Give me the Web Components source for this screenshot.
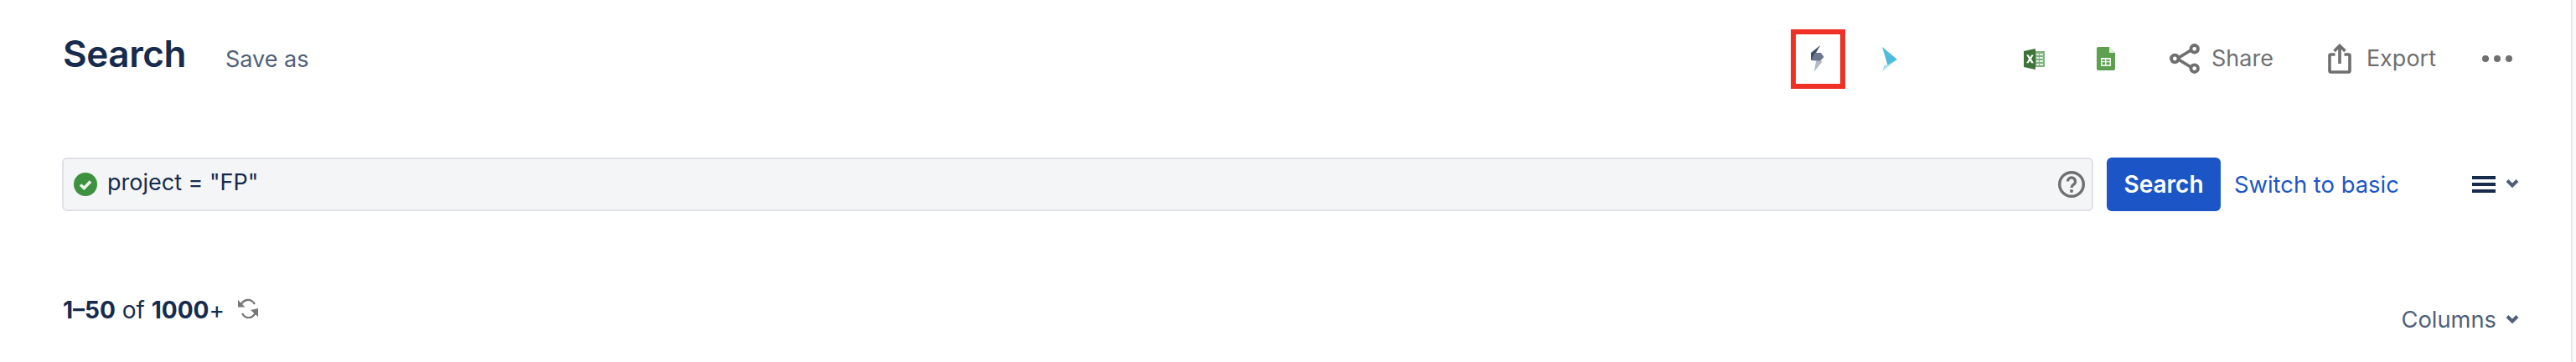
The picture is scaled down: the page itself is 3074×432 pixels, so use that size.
<!DOCTYPE html>
<html>
<head>
<meta charset="utf-8">
<style>
    html, body { margin: 0; background: #fff; height: 100%; overflow: hidden; }
    body { font-family: 'Inter', 'Liberation Sans', sans-serif; color: #172b4d; }
</style>
</head>
<body>
<search-page>
    <search-header></search-header>
    <jql-bar></jql-bar>
    <results-bar></results-bar>
</search-page>

<script>
const icons = {
    bolt: `<svg width="16" height="32" viewBox="0 0 16 32">
        <path d="M11.300 0 L0 9 V18 L5 17.500 V9 H6 Z" fill="#3f4f70"/>
        <path d="M5 9 H12 L15.500 14 L11 19 L0 18 Z" fill="#6b778c"/>
        <path d="M6 19 H14 L4 31.500 Z" fill="#b3bac5"/>
    </svg>`,
    arrow: `<svg width="18" height="29" viewBox="0 0 18 29">
        <path d="M0 0 L18 15 L6.500 22 L4 13 Z" fill="#4fbbdd"/>
        <path d="M6.500 22 L18 15 L0 29 L3 21 Z" fill="#a6dfee"/>
    </svg>`,
    excel: `<svg width="25" height="25" viewBox="0 0 25 25">
        <rect x="13" y="3" width="12" height="19" fill="#7fb27f"/>
        <path d="M15 6h3v2h-3zM19 6h4v2h-4zM15 10h3v2h-3zM19 10h4v2h-4zM15 14h3v2h-3zM19 14h4v2h-4zM15 18h3v2h-3zM19 18h4v2h-4z" fill="#e4f0e4"/>
        <path d="M0 3 L14 0 L14 25 L0 22 Z" fill="#3e7439"/>
        <path d="M3 7.500h2.800l1.700 3 1.700-3h2.600l-2.900 4.800 3 5h-2.800l-1.700-3.100-1.700 3.100H3.100l3-5z" fill="#fff"/>
    </svg>`,
    sheet: `<svg width="22" height="28" viewBox="0 0 22 28">
        <path d="M2 0 H15 L22 7 V26 a2 2 0 0 1 -2 2 H2 a2 2 0 0 1 -2 -2 V2 a2 2 0 0 1 2 -2 Z" fill="#5da150"/>
        <path d="M15 0 L22 7 H15 Z" fill="#e4efe2"/>
        <path d="M5 13 H17 V23 H5 Z M6.500 15 V17 H10 V15 Z M11.500 15 V17 H15.500 V15 Z M6.500 18.200 V21.200 H10 V18.200 Z M11.500 18.200 V21.200 H15.500 V18.200 Z" fill="#eef6ec" fill-rule="evenodd"/>
    </svg>`,
    share: `<svg width="36" height="36" viewBox="0 0 36 36" fill="none" stroke="#6f6f6f" stroke-width="3.800">
        <path d="M9 18 L27 7 M9 18 L27 29"/>
        <circle cx="6.300" cy="18" r="4.300" fill="#fff"/>
        <circle cx="29.700" cy="6.300" r="4.300" fill="#fff"/>
        <circle cx="29.700" cy="29.700" r="4.300" fill="#fff"/>
    </svg>`,
    export: `<svg width="28" height="36" viewBox="0 0 28 36" fill="none" stroke="#6f6f6f" stroke-width="3.600">
        <path d="M8.500 13 H3.500 a1.500 1.500 0 0 0 -1.500 1.500 V32.500 a1.500 1.500 0 0 0 1.500 1.500 H24.500 a1.500 1.500 0 0 0 1.500 -1.500 V14.500 a1.500 1.500 0 0 0 -1.500 -1.500 H19.500"/>
        <path d="M14 3 V24"/>
        <path d="M7.500 9 L14 2.500 L20.500 9"/>
    </svg>`
};

class SearchPage extends HTMLElement {
    constructor() {
        super();
        this.attachShadow({mode: 'open'});
        this.shadowRoot.innerHTML = `
            <style>
                :host { display: block; position: relative; height: 432px; box-sizing: border-box; padding-right: 6px; }
                .edge { position: absolute; top: 0; right: 0; bottom: 0; width: 4px; background: #fafafa; border-left: 2px solid #e8e8e8; }
            </style>
            <slot></slot>
            <div class="edge"></div>`;
    }
}

class ToolAction extends HTMLElement {
    constructor() {
        super();
        this.attachShadow({mode: 'open'});
        this.shadowRoot.innerHTML = `
            <style>
                :host { display: flex; align-items: center; gap: 14px; font-size: 27px; line-height: 36px; color: #707070; }
                :host([icon=export]) { gap: 18px; }
                svg { display: block; }
            </style>
            ${icons[this.getAttribute('icon')]}<slot></slot>`;
    }
}

class SearchHeader extends HTMLElement {
    constructor() {
        super();
        this.attachShadow({mode: 'open'});
        this.shadowRoot.innerHTML = `
            <style>
                :host { display: flex; align-items: center; height: 140px; padding-left: 75px; padding-right: 70px; }
                .title { display: flex; align-items: baseline; margin-bottom: 12px; }
                h1 { margin: 0; font-size: 44px; font-weight: 600; line-height: 56px; color: #172b4d; letter-spacing: -.4px; }
                .save { margin-left: 47px; font-size: 27px; color: #505f79; }
                .tools { margin-left: auto; display: flex; align-items: center; }
                .flag { box-sizing: border-box; width: 65px; height: 71px; border: 6px solid #ee3124; display: flex; align-items: center; justify-content: center; }
                svg { display: block; }
                .arrow { margin-left: 44px; }
                .excel { margin-left: 151px; }
                .sheet { margin-left: 62px; }
                .share { margin-left: 65px; }
                .export { margin-left: 65px; }
                .more { margin-left: 55px; display: flex; gap: 6px; }
                .more i { width: 8px; height: 8px; border-radius: 50%; background: #6f6f6f; }
            </style>
            <div class="title"><h1>Search</h1><span class="save">Save as</span></div>
            <div class="tools">
                <div class="flag">${icons.bolt}</div>
                <div class="arrow">${icons.arrow}</div>
                <div class="excel">${icons.excel}</div>
                <div class="sheet">${icons.sheet}</div>
                <tool-action class="share" icon="share">Share</tool-action>
                <tool-action class="export" icon="export">Export</tool-action>
                <div class="more"><i></i><i></i><i></i></div>
            </div>`;
    }
}

class JqlBar extends HTMLElement {
    constructor() {
        super();
        this.attachShadow({mode: 'open'});
        this.shadowRoot.innerHTML = `
            <style>
                :host { display: flex; align-items: center; height: 64px; margin-top: 48px; padding-left: 74px; padding-right: 62px; font-size: 27.4px; }
                .input { box-sizing: border-box; width: 2424px; height: 64px; display: flex; align-items: center; background: #f4f5f7; border: 2px solid #dfe1e6; border-radius: 6px; padding: 0 8px 0 12px; color: #172b4d; }
                .input span { margin-left: 12px; flex: 1; font-size: 27px; padding-bottom: 6px; }
                svg { display: block; }
                button { margin-left: 16px; width: 136px; height: 64px; border: 0; border-radius: 6px; background: #1c56c6; color: #fff; font: 600 28px 'Inter', sans-serif; padding: 0; }
                a { margin-left: 16px; color: #1c56c6; }
                .menu { margin-left: auto; display: flex; align-items: center; gap: 12px; }
                .menu svg { margin-bottom: 3px; }
                .burger { width: 28px; height: 20px; display: grid; grid-template-rows: repeat(3, 4px); align-content: space-between; }
                .burger i { background: #172b4d; }
            </style>
            <div class="input">
                <svg width="28" height="28" viewBox="0 0 28 28">
                    <circle cx="14" cy="14" r="14" fill="#3f9142"/>
                    <path d="M8 14.500 L12.300 18.500 L20 10.500" fill="none" stroke="#eaf4ea" stroke-width="3.600"/>
                </svg>
                <span>project = "FP"</span>
                <svg width="32" height="32" viewBox="0 0 32 32">
                    <circle cx="16" cy="16" r="14.300" fill="none" stroke="#6f6f6f" stroke-width="3.400"/>
                    <path d="M11.500 12.500 a4.500 4.500 0 1 1 7 3.700 c-1.600 1.100 -2.500 1.900 -2.500 3.800" fill="none" stroke="#6f6f6f" stroke-width="3.200"/>
                    <circle cx="16" cy="24" r="2" fill="#6f6f6f"/>
                </svg>
            </div>
            <button>Search</button>
            <a>Switch to basic</a>
            <div class="menu">
                <div class="burger"><i></i><i></i><i></i></div>
                <svg width="16" height="12" viewBox="0 0 16 12"><path d="M2 2.500 L8 8.500 L14 2.500" fill="none" stroke="#505f79" stroke-width="4"/></svg>
            </div>`;
    }
}

class ResultsBar extends HTMLElement {
    constructor() {
        super();
        this.attachShadow({mode: 'open'});
        this.shadowRoot.innerHTML = `
            <style>
                :host { display: flex; align-items: flex-start; margin-top: 98px; padding-left: 75px; padding-right: 62px; font-size: 28px; line-height: 36px; }
                .count { color: #172b4d; display: flex; align-items: flex-start; }
                .count span { margin-top: 2px; }
                b { font-weight: 700; }
                svg { display: block; }
                .refresh { margin: 6px 0 0 16px; }
                .columns { margin-left: auto; margin-top: 14px; display: flex; align-items: center; gap: 11px; color: #505f79; font-size: 27.3px; }
                .columns svg { margin-bottom: 2px; }
            </style>
            <div class="count"><span><b>1–50</b> of <b>1000</b>+</span>
                <svg class="refresh" width="24" height="24" viewBox="0 0 24 24" fill="none" stroke="#777" stroke-width="2.300">
                    <path d="M3 9 C6 1 15 -1 20 7"/>
                    <path d="M21 17 C17 25 9 25 5 18"/>
                    <path d="M0 2 V10.500 H8.500 Z" fill="#777" stroke="none"/>
                    <path d="M24 12 V22 L15 14 Z" fill="#777" stroke="none"/>
                </svg>
            </div>
            <div class="columns">Columns
                <svg width="16" height="12" viewBox="0 0 16 12"><path d="M2 2.500 L8 8.500 L14 2.500" fill="none" stroke="#505f79" stroke-width="4"/></svg>
            </div>`;
    }
}

customElements.define('search-page', SearchPage);
customElements.define('tool-action', ToolAction);
customElements.define('search-header', SearchHeader);
customElements.define('jql-bar', JqlBar);
customElements.define('results-bar', ResultsBar);
</script>
</body>
</html>
